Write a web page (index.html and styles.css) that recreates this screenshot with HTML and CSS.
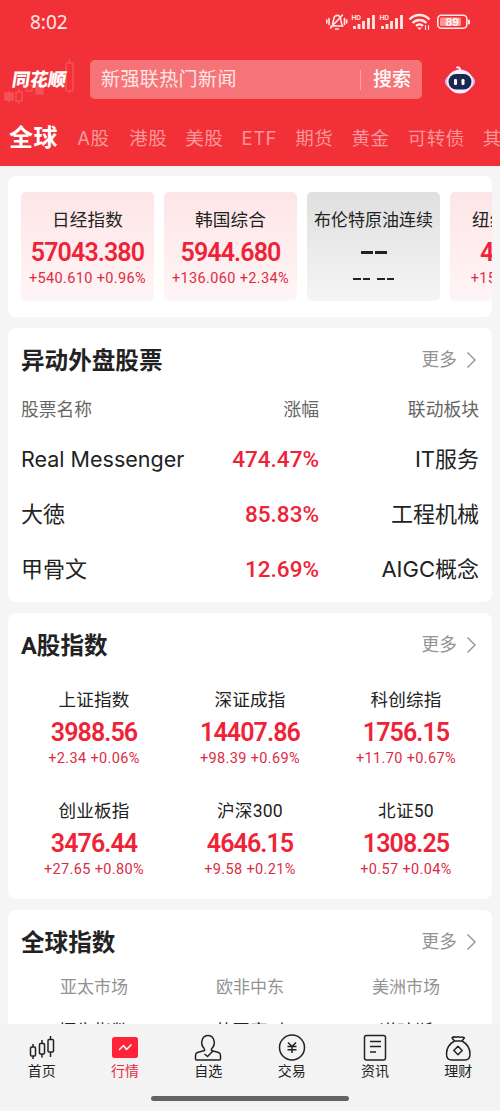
FILE: index.html
```html
<!DOCTYPE html>
<html lang="zh-CN">
<head>
    <meta charset="UTF-8">
    <meta name="viewport" content="width=device-width, initial-scale=1.0">
    <title>同花顺</title>
    <link rel="stylesheet" href="styles.css">
</head>
<body>
<div class="app">
    <!-- Header -->
    <header class="header">
        <div class="status-bar">
            <span class="time">8:02</span>
            <svg class="status-icons" width="145" height="20" viewBox="0 0 145 20" fill="none" stroke="#ffe9e6" stroke-width="1.6" stroke-linecap="round">
                <path d="M5 14h12M6.500 12c1.300-2 .7-6 2.200-7.500 1.800-1.600 4-1.500 5.200.2 1.200 1.800.8 5.500 2.200 8M9.500 17h3M4.500 16L16.500 3M3 6.500v6M.8 8v3M18.500 6.500v6M20.700 8v3" />
                <g stroke-width="2.800" stroke-linecap="butt">
                    <path d="M28.500 17v-3M33 17v-5M37.500 17V9M42.500 17V6M47.500 17V3" />
                    <path d="M56.500 17v-3M61 17v-5M65.500 17V9M70.500 17V6M75.500 17V3" />
                </g>
                <text class="hd" x="25.500" y="7.500">HD</text>
                <text class="hd" x="53.500" y="7.500">HD</text>
                <g stroke-width="2.300" stroke-linecap="butt">
                    <path d="M83.500 7.500c5.500-6 14.500-6 20 0M86.500 11c4-4 10-4 14 0M90 14c2-2 5-2 7 0" />
                </g>
                <path fill="#ffe9e6" stroke="none" d="M91 15.500h5l-2.500 2.500z" />
                <path stroke-width="1.200" d="M99.500 13.500v4M102.500 13.500v4" />
                <rect x="111.800" y="3.300" width="29" height="13" rx="3.500" />
                <rect x="114" y="5.500" width="21" height="8.600" rx="1.500" fill="#ff9893" stroke="none" />
                <path stroke-width="2" d="M143 8.500v3" />
                <text class="level" x="119.500" y="13.800">89</text>
            </svg>
        </div>
        <div class="search-row">
            <div class="brand">
                <svg class="brand-candles" width="72" height="46" viewBox="0 0 72 46" fill="none" stroke="#f66a6c" stroke-width="1.500">
                    <path d="M9 33v3M9 42v2M19 31v3M19 43v3M69.500 1v4M69.500 33v2M39 22v4" />
                    <rect x="5" y="35" width="8" height="7" fill="#f66a6c" />
                    <rect x="16" y="34" width="6" height="9" />
                    <rect x="26" y="27" width="6" height="6" />
                    <rect x="36" y="26" width="7" height="10" fill="#f66a6c" />
                    <rect x="66" y="5" width="7" height="28" rx="1" />
                </svg>
                <span class="brand-name">同花顺</span>
            </div>
            <div class="search-box">
                <span class="search-hint">新强联热门新闻</span>
                <span class="search-btn">搜索</span>
            </div>
            <svg class="robot" width="32" height="30" viewBox="0 0 32 30">
                <path d="M16 5c0-2-1-3-3-2.500" fill="none" stroke="#f4e7ff" stroke-width="2" stroke-linecap="round" />
                <ellipse cx="16" cy="16.500" rx="15" ry="9" fill="#d9b7ef" />
                <ellipse cx="16" cy="16.500" rx="13" ry="12" fill="#f6edff" />
                <rect x="4.500" y="9" width="23" height="15.500" rx="7.700" fill="#182a4f" />
                <rect x="10" y="14" width="3" height="6" rx="1.200" fill="#fff" />
                <rect x="17.500" y="14" width="3" height="6" rx="1.200" fill="#fff" />
            </svg>
        </div>
        <nav class="tabs">
            <span class="tab active">全球</span>
            <span class="tab">A股</span>
            <span class="tab">港股</span>
            <span class="tab">美股</span>
            <span class="tab">ETF</span>
            <span class="tab">期货</span>
            <span class="tab">黄金</span>
            <span class="tab">可转债</span>
            <span class="tab">其他</span>
        </nav>
    </header>

    <main class="content">
        <!-- Top quotes -->
        <section class="card quotes">
            <div class="quote up">
                <span class="name">日经指数</span>
                <span class="price">57043.380</span>
                <span class="change">+540.610 +0.96%</span>
            </div>
            <div class="quote up">
                <span class="name">韩国综合</span>
                <span class="price">5944.680</span>
                <span class="change">+136.060 +2.34%</span>
            </div>
            <div class="quote flat">
                <span class="name long">布伦特原油连续</span>
                <span class="price empty"><i></i><i></i></span>
                <span class="change empty"><i></i><i></i><i class="second"></i><i></i></span>
            </div>
            <div class="quote up">
                <span class="name">纽约金连续</span>
                <span class="price">4980.5</span>
                <span class="change">+15.2 +0.31%</span>
            </div>
        </section>

        <!-- Foreign stocks -->
        <section class="card stocks">
            <div class="card-head">
                <h2>异动外盘股票</h2>
                <span class="more">更多<svg width="11" height="18" viewBox="0 0 11 18"><path d="M1.500 1.500L9 9l-7.500 7.500" /></svg></span>
            </div>
            <div class="stock-row labels"><span>股票名称</span><span>涨幅</span><span>联动板块</span></div>
            <div class="stock-row"><span class="latin">Real Messenger</span><span class="rate">474.47%</span><span>IT服务</span></div>
            <div class="stock-row"><span>大徳</span><span class="rate">85.83%</span><span>工程机械</span></div>
            <div class="stock-row"><span>甲骨文</span><span class="rate">12.69%</span><span>AIGC概念</span></div>
        </section>

        <!-- A share indices -->
        <section class="card indices">
            <div class="card-head">
                <h2>A股指数</h2>
                <span class="more">更多<svg width="11" height="18" viewBox="0 0 11 18"><path d="M1.500 1.500L9 9l-7.500 7.500" /></svg></span>
            </div>
            <div class="index-grid">
                <div class="index"><span class="name">上证指数</span><span class="price">3988.56</span><span class="change">+2.34 +0.06%</span></div>
                <div class="index"><span class="name">深证成指</span><span class="price">14407.86</span><span class="change">+98.39 +0.69%</span></div>
                <div class="index"><span class="name">科创综指</span><span class="price">1756.15</span><span class="change">+11.70 +0.67%</span></div>
                <div class="index"><span class="name">创业板指</span><span class="price">3476.44</span><span class="change">+27.65 +0.80%</span></div>
                <div class="index"><span class="name">沪深300</span><span class="price">4646.15</span><span class="change">+9.58 +0.21%</span></div>
                <div class="index"><span class="name">北证50</span><span class="price">1308.25</span><span class="change">+0.57 +0.04%</span></div>
            </div>
        </section>

        <!-- Global indices -->
        <section class="card global">
            <div class="card-head">
                <h2>全球指数</h2>
                <span class="more">更多<svg width="11" height="18" viewBox="0 0 11 18"><path d="M1.500 1.500L9 9l-7.500 7.500" /></svg></span>
            </div>
            <div class="markets"><span>亚太市场</span><span>欧非中东</span><span>美洲市场</span></div>
            <div class="market-names"><span>恒生指数</span><span>英国富时</span><span>道琼斯</span></div>
        </section>
    </main>

    <!-- Bottom navigation -->
    <footer class="bottom">
        <nav class="bottom-nav">
            <div class="nav-item">
                <svg width="30" height="30" viewBox="0 0 30 30">
                    <path d="M6 11v3M6 23v3M15 7v3.500M15 21v3.500M23.500 3v3.500M23.500 19v5" />
                    <rect x="3.500" y="14" width="5" height="9" rx="1" />
                    <rect x="12.500" y="10.500" width="5" height="10.500" rx="1" />
                    <rect x="21" y="6.500" width="5.500" height="12.500" rx="1" />
                </svg>
                <span>首页</span>
            </div>
            <div class="nav-item current">
                <svg width="30" height="30" viewBox="0 0 30 30">
                    <rect class="tile" x="2" y="4" width="26" height="21" rx="2.500" />
                    <path class="spark" d="M9 17l4.500-4.500 3 4L21.500 11.500" />
                </svg>
                <span>行情</span>
            </div>
            <div class="nav-item">
                <svg width="30" height="30" viewBox="0 0 30 30">
                    <path d="M11.500 16C8 12.500 8.500 8.500 9.500 6c1-2.300 3-3.500 5.500-3.500S19.500 3.700 20.500 6c1 2.500 1.500 6.500-2 10v1.500l7 2c1.500.5 2 1.500 2 3V26c0 .7-.3 1-1 1h-23c-.7 0-1-.3-1-1v-3.500c0-1.500.5-2.500 2-3l7-2v-1.500M11.500 21l3 2.500 5-5" />
                </svg>
                <span>自选</span>
            </div>
            <div class="nav-item">
                <svg width="30" height="30" viewBox="0 0 30 30">
                    <circle cx="15" cy="14.500" r="12.500" />
                    <path d="M11 9.500l4 4 4-4M15 13.500V20M10.500 13.500h9M10.500 16.800h9" />
                </svg>
                <span>交易</span>
            </div>
            <div class="nav-item">
                <svg width="30" height="30" viewBox="0 0 30 30">
                    <rect x="4.500" y="2.500" width="21" height="24.500" rx="2" />
                    <path d="M10 8.500h11M10 13.500h11M10 19h6" />
                </svg>
                <span>资讯</span>
            </div>
            <div class="nav-item">
                <svg width="30" height="30" viewBox="0 0 30 30">
                    <path d="M11.500 8L9 5c1-1 2.500-1.500 4-.7 1.500-.8 2.500-.8 4 0 1.500-.8 3-.3 4.500.5L19 8zM11.500 8C6 11 3.500 15.500 3.500 21c0 4 2 6 5 6h13.500c3 0 5-2 5-6 0-5.500-2.500-10-8-13M15 13.300l4.200 4.200-4.200 4.200-4.200-4.200z" />
                </svg>
                <span>理财</span>
            </div>
        </nav>
        <div class="home-bar"></div>
    </footer>
</div>
</body>
</html>
```
FILE: styles.css
```css
* {
    box-sizing: border-box;
}

body {
    margin: 0;
    background-color: #f5f5f6;
    color: #222;
    font-family: Roboto, "Noto Sans CJK SC", sans-serif;
}

.app {
    display: flex;
    flex-direction: column;
    width: 500px;
    height: 1111px;
    overflow: hidden;
}

/* header */
.header {
    flex: none;
    height: 166px;
    background-color: #f23038;
    color: #fff;
}

.status-bar {
    display: flex;
    align-items: center;
    justify-content: space-between;
    height: 44px;
    padding: 0 29px 0 30px;
}

.time {
    font-family: "Noto Sans", sans-serif;
    font-size: 19px;
    line-height: 24px;
    color: #ffe9e6;
}

.hd {
    font: bold 6.5px Inter, sans-serif;
    fill: #ffe9e6;
    stroke: none;
}

.level {
    font: 600 10.5px Inter, sans-serif;
    fill: #fff;
    stroke: none;
}

.search-row {
    display: flex;
    align-items: center;
    height: 70px;
    padding: 1px 23px 0 0;
}

.brand {
    display: grid;
    width: 90px;
    height: 46px;
}

.brand-candles,
.brand-name {
    grid-area: 1 / 1;
}

.brand-candles {
    margin-top: 1px;
    overflow: visible;
    opacity: 0.6;
}

.brand-name {
    padding-left: 12px;
    font-size: 18px;
    font-weight: 900;
    line-height: 46px;
    transform: skewX(-9deg);
}

.search-box {
    display: flex;
    align-items: center;
    justify-content: space-between;
    width: 332px;
    height: 39px;
    padding: 0 11px;
    border-radius: 5px;
    background-color: #f67378;
    line-height: 38px;
}

.search-hint {
    font-size: 19px;
    letter-spacing: 0.4px;
    color: #ffe7e4;
}

.search-btn {
    display: flex;
    align-items: center;
    font-size: 19px;
    font-weight: 500;
}

.search-btn::before {
    content: "";
    width: 1px;
    height: 20px;
    margin-right: 12px;
    background-color: #fba5a7;
}

.robot {
    margin-left: auto;
    margin-right: 1px;
    flex: none;
}

.tabs {
    display: flex;
    align-items: center;
    gap: 18.2px;
    height: 50px;
    padding: 0 0 2px 9px;
    white-space: nowrap;
    overflow: hidden;
}

.tab {
    flex: none;
    font-family: Inter, "Noto Sans CJK SC", sans-serif;
    font-size: 18.5px;
    line-height: 28px;
    letter-spacing: 0.5px;
    color: #f9979a;
}

.tab:nth-child(2) {
    margin-right: 1.5px;
}

.tab.active {
    margin-right: 1px;
    font-size: 24px;
    font-weight: bold;
    color: #fff;
}

/* cards */
.content {
    flex: 1;
    display: flex;
    flex-direction: column;
    gap: 11px;
    min-height: 0;
    padding: 10px 8px 0;
    overflow: hidden;
}

.card {
    flex: none;
    padding: 0 13px;
    border-radius: 8px;
    background-color: #fff;
}

.quotes {
    display: flex;
    gap: 10px;
    height: 141px;
    padding-top: 16px;
    overflow: hidden;
}

.quote {
    flex: none;
    width: 133px;
    height: 109px;
    padding-top: 15px;
    border-radius: 5px;
}

.quote.up {
    background: linear-gradient(#fde5e7, #fff5f6);
}

.quote.flat {
    background: linear-gradient(#dfdfdf, #f5f5f5);
}

.quote,
.index {
    display: flex;
    flex-direction: column;
    align-items: center;
    white-space: nowrap;
}

.name {
    font-size: 17.6px;
    line-height: 27px;
    letter-spacing: 0.2px;
}

.name.long {
    font-size: 17px;
    letter-spacing: 0;
}

.price {
    font-size: 25px;
    font-weight: 600;
    line-height: 38px;
    letter-spacing: -0.9px;
    color: #ef2338;
}

.change {
    font-size: 14.5px;
    line-height: 14px;
    letter-spacing: 0.35px;
    color: #dc2b45;
}

.empty {
    display: flex;
    align-items: center;
    gap: 2px;
    height: 37px;
}

.empty i {
    width: 12px;
    height: 3px;
    background-color: #222;
}

.change.empty {
    height: 16px;
}

.change.empty i {
    width: 7.5px;
    height: 1.5px;
}

.change.empty .second {
    margin-left: 5px;
}

.card-head {
    display: flex;
    align-items: center;
    justify-content: space-between;
    height: 64px;
}

h2 {
    margin: 0;
    padding-top: 2px;
    font-size: 23.6px;
    font-weight: 700;
    line-height: 34px;
    color: #222;
}

.more {
    display: flex;
    align-items: center;
    gap: 9px;
    padding-right: 2px;
    font-size: 17.7px;
    line-height: 26px;
    color: #939393;
}

.more path {
    fill: none;
    stroke: #939393;
    stroke-width: 1.4;
}

.stocks {
    height: 274px;
}

.stock-row {
    display: grid;
    grid-template-columns: 180px 118px 1fr;
    align-items: center;
    height: 55px;
    font-family: Inter, "Noto Sans CJK SC", sans-serif;
    font-size: 22px;
    line-height: 55px;
}

.stock-row span:nth-child(n+2) {
    text-align: right;
}

.stock-row.labels {
    height: 36px;
    margin-bottom: 4px;
    font-size: 17.8px;
    line-height: 36px;
    color: #666;
}

.latin {
    font-size: 21.5px;
    white-space: nowrap;
}

.rate {
    font-family: Roboto, sans-serif;
    font-size: 22.5px;
    font-weight: 500;
    color: #ef2338;
}

.indices {
    height: 286px;
}

.index-grid {
    display: grid;
    grid-template-columns: repeat(3, 156px);
    grid-auto-rows: 111px;
    margin: 10px 0 0 -5px;
}

.markets,
.market-names {
    display: grid;
    grid-template-columns: repeat(3, 156px);
    margin: 1px 0 0 -5px;
    text-align: center;
    font-size: 17px;
    line-height: 24px;
    color: #939393;
}

.market-names {
    margin-top: 21px;
    font-size: 17.7px;
    color: #222;
}

/* bottom */
.bottom {
    flex: none;
    height: 87px;
    background-color: #f3f3f3;
}

.bottom-nav {
    display: flex;
    height: 72px;
    padding-top: 9px;
}

.nav-item {
    flex: 1;
    display: flex;
    flex-direction: column;
    align-items: center;
    font-size: 14px;
    line-height: 17px;
    color: #222;
}

.nav-item svg {
    fill: none;
    stroke: #222;
    stroke-width: 1.5;
    stroke-linejoin: round;
}

.nav-item.current {
    color: #e32b42;
}

.nav-item .tile {
    fill: #ff2438;
    stroke: none;
}

.nav-item .spark {
    stroke: #fff;
}

.home-bar {
    width: 198px;
    height: 5px;
    margin: 0 auto;
    border-radius: 3px;
    background-color: #626462;
}
```
